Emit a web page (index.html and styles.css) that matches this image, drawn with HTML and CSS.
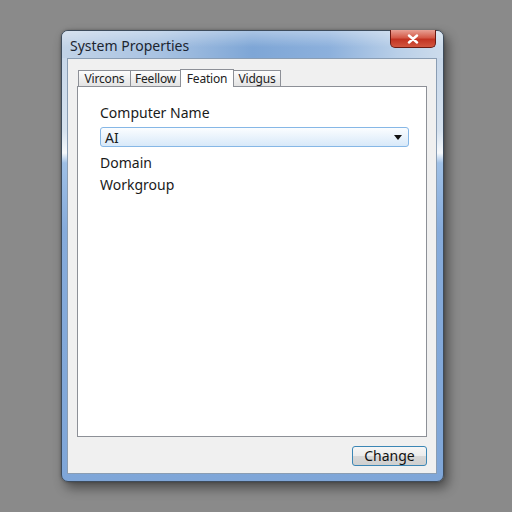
FILE: index.html
```html
<!DOCTYPE html>
<html lang="en">
<head>
    <meta charset="UTF-8">
    <meta name="viewport" content="width=device-width, initial-scale=1.0">
    <title>System Properties</title>
    <link rel="stylesheet" href="styles.css">
</head>
<body>

<div class="window">
    <div class="titlebar">
        <span class="title">System Properties</span>
        <button class="close" aria-label="Close">
            <svg width="12" height="10" viewBox="0 0 12 10">
                <path d="M2 1.5 L10 8.5 M10 1.5 L2 8.5" stroke="#fff" stroke-width="2.4" stroke-linecap="round"/>
            </svg>
        </button>
    </div>

    <div class="client">
        <div class="tabs">
            <div class="tab t1">Vircons</div>
            <div class="tab t2">Feellow</div>
            <div class="tab t3 active">Feation</div>
            <div class="tab t4">Vidgus</div>
        </div>

        <div class="panel">
            <div class="field-label">Computer Name</div>
            <div class="combo">
                <span>AI</span>
                <span class="arrow"></span>
            </div>
            <div class="option first">Domain</div>
            <div class="option">Workgroup</div>
        </div>

        <div class="actions">
            <button class="btn">Change</button>
        </div>
    </div>
</div>

</body>
</html>
```

FILE: styles.css
```css
body {
    margin: 0;
    padding: 30px 0 0 61px;
    background-color: #8a8a8a;
    font-family: "Noto Sans", "Open Sans", sans-serif;
    color: #1a1a1a;
    height: 512px;
    box-sizing: border-box;
    overflow: hidden;
}
.window {
    width: 383px;
    height: 452px;
    box-sizing: border-box;
    border: 1px solid #3e4c5c;
    border-radius: 7px;
    padding: 0 6px 7px 5px;
    display: flex;
    flex-direction: column;
    background: linear-gradient(to bottom, #c3d4e8 0, #d6e2ef 100px, #f6f9fc 122px, #9fc0e6 132px, #86abdb 200px, #7fa6d8 100%);
    box-shadow: 4px 6px 12px rgba(0, 0, 0, 0.45), 0 0 3px rgba(0, 0, 0, 0.3);
}
.titlebar {
    height: 27px;
    margin: 0 -6px 0 -5px;
    padding: 0 6px 0 8px;
    border-radius: 6px 6px 0 0;
    display: flex;
    align-items: flex-start;
    justify-content: space-between;
    background:
        linear-gradient(to bottom, rgba(255, 255, 255, 0.35), rgba(255, 255, 255, 0) 60%),
        linear-gradient(to right, #c2d3e7 0, #a9c3e2 25%, #7ea6d6 50%, #8cb0dc 70%, #b9cfe8 88%, #cddcec 100%);
}
.title {
    font-size: 14px;
    line-height: 14px;
    margin-top: 8px;
    color: #1c2530;
}
.close {
    width: 46px;
    height: 18px;
    margin-top: -1px;
    margin-right: 1px;
    border: 1px solid #6b1a12;
    border-top: none;
    border-radius: 0 0 5px 5px;
    background: linear-gradient(to bottom, #e8a195 0, #d45a48 45%, #c23322 55%, #d2563f 100%);
    display: flex;
    align-items: center;
    justify-content: center;
    padding: 0;
}
.client {
    flex: 1;
    background-color: #f0f0f0;
    border: 1px solid #8a9db3;
    padding: 10px 9px 7px 9px;
    display: flex;
    flex-direction: column;
}
.tabs {
    display: flex;
    align-items: flex-end;
    padding-left: 1px;
    height: 17px;
}
.tab {
    height: 15px;
    box-sizing: content-box;
    text-align: center;
    font-size: 12px;
    line-height: 15px;
    letter-spacing: -0.2px;
    border: 1px solid #8d9097;
    border-bottom: none;
    margin-right: -1px;
    background: linear-gradient(to bottom, #fdfdfd, #e3e3e3);
    color: #222;
    white-space: nowrap;
}
.t1 { width: 51px; }
.t2 { width: 49px; }
.t3 { width: 52px; }
.t4 { width: 46px; }
.tab.active {
    height: 17px;
    line-height: 18px;
    background: #ffffff;
    position: relative;
    margin-bottom: -1px;
    z-index: 1;
}
.panel {
    flex: 1;
    background: #ffffff;
    border: 1px solid #8d9097;
    padding: 16px 17px 0 22px;
}
.field-label {
    font-size: 14px;
    line-height: 20px;
}
.combo {
    margin-top: 4px;
    height: 20px;
    box-sizing: border-box;
    border: 1px solid #86b7e6;
    border-radius: 3px;
    background: linear-gradient(to bottom, #fbfdff, #d8e9f9);
    display: flex;
    align-items: center;
    justify-content: space-between;
    padding: 0 6px 0 4px;
    font-size: 14px;
}
.arrow {
    width: 0;
    height: 0;
    border-left: 4px solid transparent;
    border-right: 4px solid transparent;
    border-top: 5px solid #111;
}
.option {
    font-size: 14px;
    line-height: 22px;
}
.option.first {
    margin-top: 5px;
}
.actions {
    display: flex;
    justify-content: flex-end;
    padding-top: 9px;
}
.btn {
    width: 75px;
    height: 20px;
    border: 1px solid #3b86b5;
    border-radius: 3px;
    background: linear-gradient(to bottom, #f6f6f6 0, #ececec 50%, #d8d8d8 51%, #cfcfcf 100%);
    font-family: "Noto Sans", "Open Sans", sans-serif;
    font-size: 14px;
    line-height: 16px;
    padding: 0;
    color: #111;
}
```
